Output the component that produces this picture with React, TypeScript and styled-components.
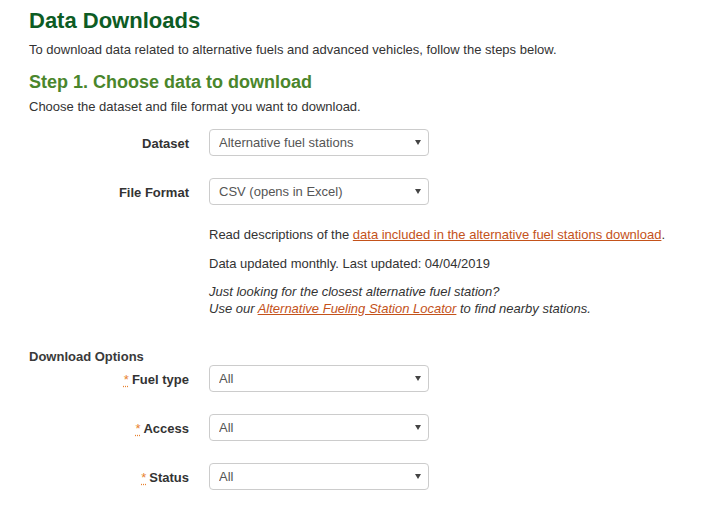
import React from 'react';
import styled, { createGlobalStyle } from 'styled-components';

const GlobalStyle = createGlobalStyle`
  body {
    margin: 0;
    background: #fff;
    font-family: 'Liberation Sans', Arial, sans-serif;
    color: #333;
  }
`

const Page = styled.div`
  padding: 0 29px;
  width: 714px;
  box-sizing: border-box;
`

const Title = styled.h1`
  margin: 8px 0 0;
  font-size: 22px;
  line-height: 26px;
  font-weight: 700;
  color: #0d5c24;
`

const Intro = styled.p`
  margin: 7px 0 0;
  font-size: 13px;
  line-height: 18px;
`

const StepTitle = styled.h2`
  margin: 12px 0 0;
  font-size: 18px;
  line-height: 22px;
  font-weight: 700;
  color: #4a862c;
`

const Form = styled.form`
  margin-top: 13px;
`

const Row = styled.div`
  display: grid;
  grid-template-columns: 160px 220px;
  column-gap: 20px;
  align-items: start;
  margin-bottom: 22px;
`

const Label = styled.label`
  padding-top: 6px;
  font-size: 13px;
  line-height: 17px;
  font-weight: 700;
  color: #333;
  text-align: right;
`

const Req = styled.abbr`
  color: #e8822f;
  font-weight: 400;
  text-decoration: underline dotted;
  text-underline-offset: 2px;
  margin-right: 3px;
  cursor: help;
`

const SelectWrap = styled.div`
  position: relative;
  width: 220px;
  height: 27px;
`

const Select = styled.select`
  appearance: none;
  -webkit-appearance: none;
  box-sizing: border-box;
  width: 100%;
  height: 27px;
  margin: 0;
  padding: 0 20px 1px 9px;
  border: 1px solid #ccc;
  border-radius: 4px;
  background: #fff;
  font-family: 'Liberation Sans', Arial, sans-serif;
  font-size: 13px;
  color: #555;
  outline: none;
`

const Caret = styled.span`
  position: absolute;
  right: 8px;
  top: 11px;
  width: 0;
  height: 0;
  border-left: 3px solid transparent;
  border-right: 3px solid transparent;
  border-top: 5px solid #444;
  pointer-events: none;
`

const Info = styled.div`
  margin-left: 180px;
  margin-top: -1px;
  font-size: 13px;
  line-height: 17px;
`

const InfoLine = styled.p<{ $gap?: number }>`
  margin: ${p => p.$gap ?? 0}px 0 0;
`

const Note = styled(InfoLine)`
  font-style: italic;
`

const TextLink = styled.a`
  color: #c4521a;
  text-decoration: underline;
`

const Legend = styled.div`
  margin-top: 31px;
  font-size: 13px;
  line-height: 17px;
  font-weight: 700;
  color: #3a3a3a;
`

type FieldProps = {
  label: string;
  value: string;
  required?: boolean;
}

const Field: React.FC<FieldProps> = ({ label, value, required }) => (
  <Row>
    <Label>
      {required && <Req title='required'>*</Req>}
      {label}
    </Label>
    <SelectWrap>
      <Select defaultValue={value}>
        <option>{value}</option>
      </Select>
      <Caret />
    </SelectWrap>
  </Row>
)

const App: React.FC = () => {
  return (
    <Page>
      <GlobalStyle />
      <Title>Data Downloads</Title>
      <Intro>To download data related to alternative fuels and advanced vehicles, follow the steps below.</Intro>
      <StepTitle>Step 1. Choose data to download</StepTitle>
      <Intro style={{ marginTop: 5 }}>Choose the dataset and file format you want to download.</Intro>
      <Form>
        <Field label='Dataset' value='Alternative fuel stations' />
        <Field label='File Format' value='CSV (opens in Excel)' />
        <Info>
          <InfoLine>
            Read descriptions of the <TextLink href='#'>data included in the alternative fuel stations download</TextLink>.
          </InfoLine>
          <InfoLine $gap={12}>Data updated monthly. Last updated: 04/04/2019</InfoLine>
          <Note $gap={11}>
            Just looking for the closest alternative fuel station?<br />
            Use our <TextLink href='#'>Alternative Fueling Station Locator</TextLink> to find nearby stations.
          </Note>
        </Info>
        <Legend>Download Options</Legend>
        <Field label='Fuel type' value='All' required />
        <Field label='Access' value='All' required />
        <Field label='Status' value='All' required />
      </Form>
    </Page>
  )
}

export default App;
